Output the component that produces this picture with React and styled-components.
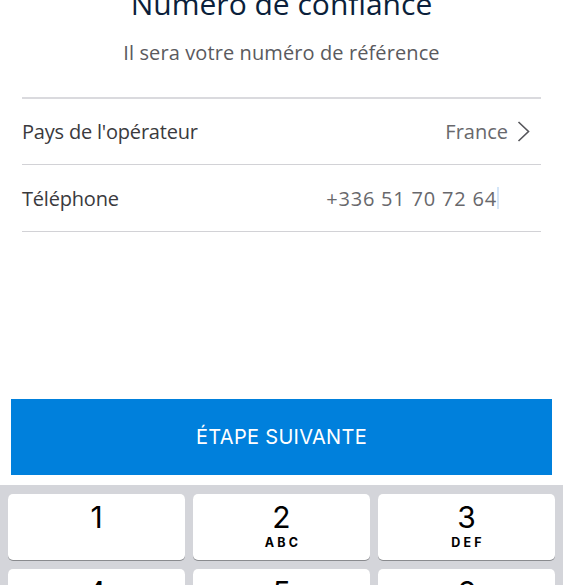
import React from "react";
import styled, { createGlobalStyle } from "styled-components";

const GlobalStyle = createGlobalStyle`
  html, body { margin: 0; padding: 0; background: #ffffff; }
  body { overflow: hidden; font-family: "Open Sans", "Noto Sans", sans-serif; }
  * { box-sizing: border-box; }
`;

const Page = styled.div`
  width: 563px;
  height: 585px;
  overflow: hidden;
  display: flex;
  flex-direction: column;
  background: #fff;
`;

const Title = styled.h1`
  margin: -14px 0 0;
  font-size: 30px;
  line-height: 36px;
  font-weight: 400;
  color: #0b1f3b;
  text-align: center;
`;

const Subtitle = styled.p`
  margin: 19px 0 0;
  font-size: 20px;
  line-height: 1.2;
  color: #5a5a5e;
  text-align: center;
  letter-spacing: 0.1px;
`;

const List = styled.div`
  margin: 32px 22px 0;
  border-top: 2px solid #dadade;
  display: flex;
  flex-direction: column;
`;

const Row = styled.div`
  height: ${(p) => p.$h}px;
  border-bottom: 1px solid #d2d2d6;
  display: flex;
  align-items: center;
  justify-content: space-between;
`;

const Label = styled.span`
  font-size: 20px;
  color: #3a3a3d;
  letter-spacing: -0.2px;
`;

const Value = styled.span`
  display: flex;
  align-items: center;
  font-size: 20px;
  color: #68686c;
  margin-right: ${(p) => p.$inset}px;
  letter-spacing: ${(p) => p.$spacing || 0}px;
`;

const Chevron = styled.svg`
  margin-left: 9px;
  display: block;
`;

const Caret = styled.span`
  display: inline-block;
  width: 2px;
  height: 22px;
  margin-left: 0;
  background: #d3e5f8;
`;

const NextButton = styled.button`
  margin: 167px 11px 0;
  height: 76px;
  flex-shrink: 0;
  border: none;
  background: #0080dc;
  color: #ffffff;
  font-family: "Inter", "Roboto", sans-serif;
  font-size: 20px;
  font-weight: 400;
  letter-spacing: 0.3px;
  padding: 0;
`;

const Keyboard = styled.div`
  margin-top: 10px;
  flex-shrink: 0;
  background: #d4d5da;
  padding: 9px 8px 8px;
  display: grid;
  grid-template-columns: repeat(3, 177px);
  column-gap: 8px;
  row-gap: 9px;
`;

const Key = styled.div`
  height: 66px;
  background: #ffffff;
  border-radius: 5px;
  box-shadow: 0 1px 0 #8a8b8f;
  display: flex;
  flex-direction: column;
  align-items: center;
  padding-top: 5px;
  font-family: "Inter", "Roboto", sans-serif;
  color: #000;
`;

const Digit = styled.span`
  font-size: 30px;
  line-height: 36px;
  font-weight: 400;
`;

const Letters = styled.span`
  font-size: 12.5px;
  line-height: 14px;
  font-weight: 700;
  letter-spacing: 3.2px;
  margin-top: 1px;
  padding-left: 3px;
`;

const keys = [
  ["1", ""],
  ["2", "ABC"],
  ["3", "DEF"],
  ["4", "GHI"],
  ["5", "JKL"],
  ["6", "MNO"],
  ["7", "PQRS"],
  ["8", "TUV"],
  ["9", "WXYZ"],
];

export default function App() {
  return (
    <Page>
      <GlobalStyle />
      <Title>Numéro de confiance</Title>
      <Subtitle>Il sera votre numéro de référence</Subtitle>
      <List>
        <Row $h={66}>
          <Label>Pays de l'opérateur</Label>
          <Value $inset={11}>
            France
            <Chevron width="13" height="21" viewBox="0 0 13 21">
              <path d="M1.5 1 L11.5 10.5 L1.5 20" fill="none" stroke="#55555a" strokeWidth="1.6" />
            </Chevron>
          </Value>
        </Row>
        <Row $h={67}>
          <Label>Téléphone</Label>
          <Value $inset={42} $spacing={0.8}>
            +336 51 70 72 64
            <Caret />
          </Value>
        </Row>
      </List>
      <NextButton>ÉTAPE SUIVANTE</NextButton>
      <Keyboard>
        {keys.map(([d, l]) => (
          <Key key={d}>
            <Digit>{d}</Digit>
            {l && <Letters>{l}</Letters>}
          </Key>
        ))}
      </Keyboard>
    </Page>
  );
}
